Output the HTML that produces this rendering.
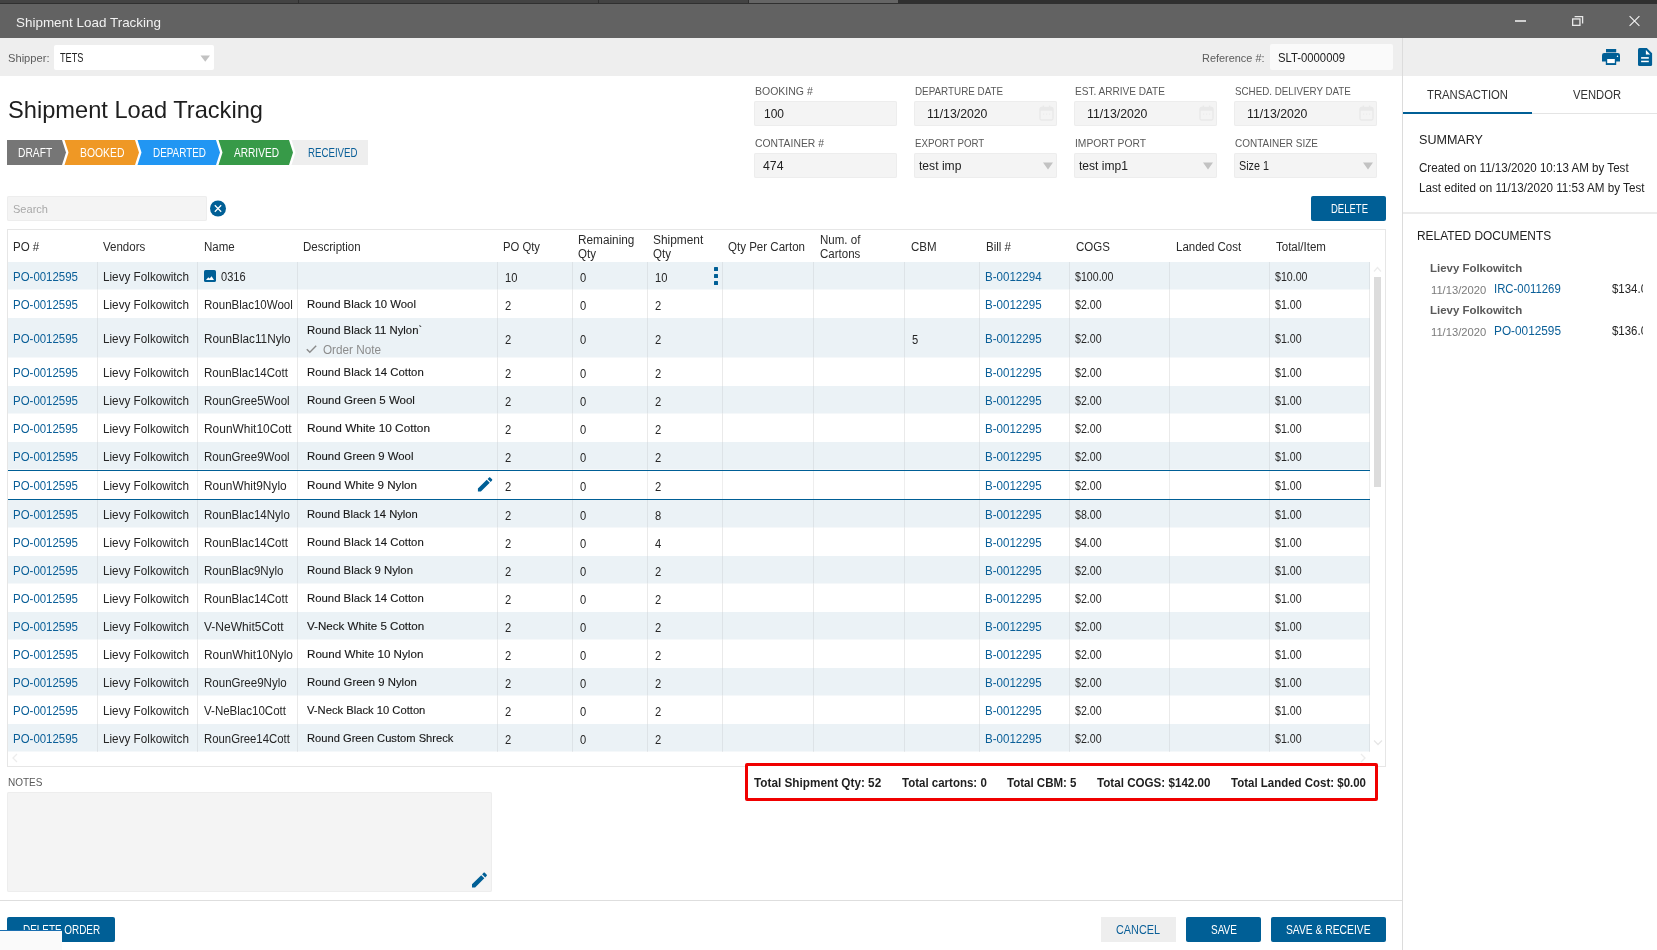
<!DOCTYPE html>
<html><head><meta charset="utf-8"><title>Shipment Load Tracking</title>
<style>
html,body{margin:0;padding:0;}
body{width:1657px;height:950px;position:relative;overflow:hidden;background:#ffffff;font-family:"Liberation Sans",sans-serif;}
.t{position:absolute;white-space:nowrap;transform-origin:0 0;}
#root{position:absolute;left:0;top:0;width:1657px;height:950px;overflow:hidden;will-change:transform;}
</style></head><body>
<div id="root">
<div style="position:absolute;left:0px;top:0px;width:1657px;height:4px;background:#303030;"></div>
<div style="position:absolute;left:0px;top:0px;width:898px;height:3px;background:#434343;"></div>
<div style="position:absolute;left:298px;top:0px;width:1px;height:3px;background:#2f2f2f;"></div>
<div style="position:absolute;left:598px;top:0px;width:1px;height:3px;background:#2f2f2f;"></div>
<div style="position:absolute;left:748px;top:0px;width:1px;height:3px;background:#2f2f2f;"></div>
<div style="position:absolute;left:749px;top:0px;width:149px;height:3px;background:#656565;"></div>
<div style="position:absolute;left:0px;top:4px;width:1657px;height:34px;background:#626262;"></div>
<div class="t" style="left:15.5px;top:16.02px;font-size:13.5px;line-height:13.5px;color:#f2f2f2;transform:scaleX(0.9959);">Shipment Load Tracking</div>
<div style="position:absolute;left:1515px;top:20px;width:10.5px;height:2px;background:#d0d0d0;"></div>
<svg style="position:absolute;left:1566px;top:10px" width="24" height="22" viewBox="1566 10 24 22"><rect x="1572.65" y="18.95" width="7.3" height="6.4" fill="none" stroke="#e8e8e8" stroke-width="1.3"/><path d="M1574.6 16.6 H1582.6 V23.4" fill="none" stroke="#e8e8e8" stroke-width="1.3"/></svg>
<svg style="position:absolute;left:1626px;top:13px" width="16" height="16" viewBox="1626 13 16 16"><path d="M1629.6 16.1 L1639.4 25.9 M1639.4 16.1 L1629.6 25.9" stroke="#f0f0f0" stroke-width="1.15"/></svg>
<div style="position:absolute;left:0px;top:38px;width:1402px;height:38px;background:#eeeeee;"></div>
<div style="position:absolute;left:1403px;top:38px;width:254px;height:38px;background:#eeeeee;"></div>
<div style="position:absolute;left:1402px;top:38px;width:1px;height:912px;background:#dcdcdc;"></div>
<div class="t" style="left:7.5px;top:53.01px;font-size:11.5px;line-height:11.5px;color:#5c5c5c;transform:scaleX(0.9688);">Shipper:</div>
<div style="position:absolute;left:54px;top:45px;width:160px;height:25px;background:#ffffff;border-radius:2px;"></div>
<div class="t" style="left:59.5px;top:51.91px;font-size:12.8px;line-height:12.8px;color:#222;transform:scaleX(0.7183);">TETS</div>
<svg style="position:absolute;left:200px;top:55px" width="11" height="7"><path d="M0.5 0.5 L10 0.5 L5.25 6.7 Z" fill="#c2c2c2"/></svg>
<div class="t" style="left:1201.5px;top:53.01px;font-size:11.5px;line-height:11.5px;color:#5c5c5c;transform:scaleX(0.9492);">Reference #:</div>
<div style="position:absolute;left:1270px;top:44px;width:123px;height:26px;background:#fafafa;border-radius:2px;"></div>
<div class="t" style="left:1278px;top:52.34px;font-size:12.3px;line-height:12.3px;color:#222;transform:scaleX(0.9184);">SLT-0000009</div>
<svg style="position:absolute;left:1596px;top:44px" width="61" height="26" viewBox="1596 44 61 26"><rect x="1606" y="49" width="10.2" height="3" fill="#005f96"/><rect x="1606" y="52" width="10.2" height="1" fill="#8fb1c9"/><path d="M1604.2 53 H1617.8 Q1620 53 1620 55.2 V61.5 H1602 V55.2 Q1602 53 1604.2 53 Z" fill="#005f96"/><rect x="1605.8" y="58" width="10.4" height="7" fill="#005f96"/><rect x="1607.2" y="59" width="7.6" height="4.1" fill="#ffffff"/><path d="M1616.6 56.9 L1617.5 55 L1618.3 56.9 Z" fill="#ffffff"/><path d="M1639.5 48 H1646.8 L1652.1 53.2 V64.6 Q1652.1 66.1 1650.6 66.1 H1639.5 Q1638 66.1 1638 64.6 V49.5 Q1638 48 1639.5 48 Z" fill="#005f96"/><path d="M1645.9 49.9 V54.5 H1650.2 Z" fill="#ffffff"/><rect x="1641.1" y="57.1" width="7.7" height="1.6" fill="#ffffff"/><rect x="1641.1" y="60.7" width="7.7" height="1.5" fill="#ffffff"/></svg>
<div class="t" style="left:7.5px;top:98.13px;font-size:24px;line-height:24px;color:#1e1e1e;transform:scaleX(0.9852);">Shipment Load Tracking</div>
<svg style="position:absolute;left:0;top:0" width="400" height="170">
<polygon points="7,140 62,140 66,152.5 62,165 7,165" fill="#767676"/>
<polygon points="64.5,140 135,140 139,152.5 135,165 64.5,165 68.5,152.5" fill="#ef9825"/>
<polygon points="137.5,140 216,140 220,152.5 216,165 137.5,165 141.5,152.5" fill="#2196f3"/>
<polygon points="218.5,140 289,140 293,152.5 289,165 218.5,165 222.5,152.5" fill="#379a48"/>
<polygon points="291.5,140 368,140 368,165 291.5,165 295.5,152.5" fill="#eeeeee"/>
</svg>
<div class="t" style="left:17.7px;top:146.95px;font-size:12.4px;line-height:12.4px;color:#ffffff;transform:scaleX(0.8275);">DRAFT</div>
<div class="t" style="left:79.8px;top:146.95px;font-size:12.4px;line-height:12.4px;color:#ffffff;transform:scaleX(0.8368);">BOOKED</div>
<div class="t" style="left:152.5px;top:146.95px;font-size:12.4px;line-height:12.4px;color:#ffffff;transform:scaleX(0.7984);">DEPARTED</div>
<div class="t" style="left:233.5px;top:146.95px;font-size:12.4px;line-height:12.4px;color:#ffffff;transform:scaleX(0.8163);">ARRIVED</div>
<div class="t" style="left:307.5px;top:146.95px;font-size:12.4px;line-height:12.4px;color:#0a5f98;transform:scaleX(0.7808);">RECEIVED</div>
<div class="t" style="left:754.5px;top:85.87px;font-size:11.2px;line-height:11.2px;color:#595959;transform:scaleX(0.9381);">BOOKING #</div>
<div style="position:absolute;left:754px;top:101px;width:143px;height:25px;background:#f4f4f4;border-radius:2px;box-shadow:inset 0 0 0 1px #ededed;"></div>
<div class="t" style="left:754.5px;top:137.87px;font-size:11.2px;line-height:11.2px;color:#595959;transform:scaleX(0.9266);">CONTAINER #</div>
<div style="position:absolute;left:754px;top:153px;width:143px;height:25px;background:#f4f4f4;border-radius:2px;box-shadow:inset 0 0 0 1px #ededed;"></div>
<div class="t" style="left:764px;top:107.77px;font-size:12.5px;line-height:12.5px;color:#222;transform:scaleX(0.9589);">100</div>
<div class="t" style="left:763px;top:159.77px;font-size:12.5px;line-height:12.5px;color:#222;transform:scaleX(0.9829);">474</div>
<div class="t" style="left:914.5px;top:85.87px;font-size:11.2px;line-height:11.2px;color:#595959;transform:scaleX(0.8803);">DEPARTURE DATE</div>
<div style="position:absolute;left:914px;top:101px;width:143px;height:25px;background:#f4f4f4;border-radius:2px;box-shadow:inset 0 0 0 1px #ededed;"></div>
<div class="t" style="left:914.5px;top:137.87px;font-size:11.2px;line-height:11.2px;color:#595959;transform:scaleX(0.8711);">EXPORT PORT</div>
<div style="position:absolute;left:914px;top:153px;width:143px;height:25px;background:#f4f4f4;border-radius:2px;box-shadow:inset 0 0 0 1px #ededed;"></div>
<div class="t" style="left:926.6px;top:107.77px;font-size:12.5px;line-height:12.5px;color:#222;transform:scaleX(0.9800);">11/13/2020</div>
<svg style="position:absolute;left:1039px;top:105px" width="15" height="16" viewBox="0 0 15 16"><rect x="1" y="2.5" width="13" height="12.5" rx="1.5" fill="none" stroke="#e9e9e9" stroke-width="1.3"/><rect x="1" y="2.5" width="13" height="3.2" fill="#e9e9e9"/><rect x="3.5" y="0.5" width="1.6" height="3" fill="#e9e9e9"/><rect x="9.9" y="0.5" width="1.6" height="3" fill="#e9e9e9"/><rect x="4" y="8.5" width="1.2" height="1.2" fill="#ececec"/><rect x="7" y="8.5" width="1.2" height="1.2" fill="#ececec"/><rect x="10" y="8.5" width="1.2" height="1.2" fill="#ececec"/></svg>
<div class="t" style="left:919.3px;top:159.77px;font-size:12.5px;line-height:12.5px;color:#222;transform:scaleX(0.9689);">test imp</div>
<svg style="position:absolute;left:1043px;top:162px" width="11" height="8"><path d="M0 0.5 L10 0.5 L5 7.5 Z" fill="#c2c2c2"/></svg>
<div class="t" style="left:1074.5px;top:85.87px;font-size:11.2px;line-height:11.2px;color:#595959;transform:scaleX(0.9000);">EST. ARRIVE DATE</div>
<div style="position:absolute;left:1074px;top:101px;width:143px;height:25px;background:#f4f4f4;border-radius:2px;box-shadow:inset 0 0 0 1px #ededed;"></div>
<div class="t" style="left:1074.5px;top:137.87px;font-size:11.2px;line-height:11.2px;color:#595959;transform:scaleX(0.9200);">IMPORT PORT</div>
<div style="position:absolute;left:1074px;top:153px;width:143px;height:25px;background:#f4f4f4;border-radius:2px;box-shadow:inset 0 0 0 1px #ededed;"></div>
<div class="t" style="left:1086.6px;top:107.77px;font-size:12.5px;line-height:12.5px;color:#222;transform:scaleX(0.9800);">11/13/2020</div>
<svg style="position:absolute;left:1199px;top:105px" width="15" height="16" viewBox="0 0 15 16"><rect x="1" y="2.5" width="13" height="12.5" rx="1.5" fill="none" stroke="#e9e9e9" stroke-width="1.3"/><rect x="1" y="2.5" width="13" height="3.2" fill="#e9e9e9"/><rect x="3.5" y="0.5" width="1.6" height="3" fill="#e9e9e9"/><rect x="9.9" y="0.5" width="1.6" height="3" fill="#e9e9e9"/><rect x="4" y="8.5" width="1.2" height="1.2" fill="#ececec"/><rect x="7" y="8.5" width="1.2" height="1.2" fill="#ececec"/><rect x="10" y="8.5" width="1.2" height="1.2" fill="#ececec"/></svg>
<div class="t" style="left:1079.3px;top:159.77px;font-size:12.5px;line-height:12.5px;color:#222;transform:scaleX(0.9662);">test imp1</div>
<svg style="position:absolute;left:1203px;top:162px" width="11" height="8"><path d="M0 0.5 L10 0.5 L5 7.5 Z" fill="#c2c2c2"/></svg>
<div class="t" style="left:1234.5px;top:85.87px;font-size:11.2px;line-height:11.2px;color:#595959;transform:scaleX(0.8750);">SCHED. DELIVERY DATE</div>
<div style="position:absolute;left:1234px;top:101px;width:143px;height:25px;background:#f4f4f4;border-radius:2px;box-shadow:inset 0 0 0 1px #ededed;"></div>
<div class="t" style="left:1234.5px;top:137.87px;font-size:11.2px;line-height:11.2px;color:#595959;transform:scaleX(0.8912);">CONTAINER SIZE</div>
<div style="position:absolute;left:1234px;top:153px;width:143px;height:25px;background:#f4f4f4;border-radius:2px;box-shadow:inset 0 0 0 1px #ededed;"></div>
<div class="t" style="left:1246.6px;top:107.77px;font-size:12.5px;line-height:12.5px;color:#222;transform:scaleX(0.9800);">11/13/2020</div>
<svg style="position:absolute;left:1359px;top:105px" width="15" height="16" viewBox="0 0 15 16"><rect x="1" y="2.5" width="13" height="12.5" rx="1.5" fill="none" stroke="#e9e9e9" stroke-width="1.3"/><rect x="1" y="2.5" width="13" height="3.2" fill="#e9e9e9"/><rect x="3.5" y="0.5" width="1.6" height="3" fill="#e9e9e9"/><rect x="9.9" y="0.5" width="1.6" height="3" fill="#e9e9e9"/><rect x="4" y="8.5" width="1.2" height="1.2" fill="#ececec"/><rect x="7" y="8.5" width="1.2" height="1.2" fill="#ececec"/><rect x="10" y="8.5" width="1.2" height="1.2" fill="#ececec"/></svg>
<div class="t" style="left:1239.3px;top:159.77px;font-size:12.5px;line-height:12.5px;color:#222;transform:scaleX(0.8635);">Size 1</div>
<svg style="position:absolute;left:1363px;top:162px" width="11" height="8"><path d="M0 0.5 L10 0.5 L5 7.5 Z" fill="#c2c2c2"/></svg>
<div style="position:absolute;left:7px;top:196px;width:200px;height:25px;background:#f4f4f4;border-radius:2px;box-shadow:inset 0 0 0 1px #ededed;"></div>
<div class="t" style="left:13px;top:203.66px;font-size:11.8px;line-height:11.8px;color:#a9a9a9;transform:scaleX(0.9361);">Search</div>
<svg style="position:absolute;left:210px;top:200px" width="16" height="17" viewBox="0 0 16 17"><circle cx="8" cy="8.5" r="8" fill="#005f96"/><path d="M4.8 5.3 L11.2 11.7 M11.2 5.3 L4.8 11.7" stroke="#fff" stroke-width="1.25"/></svg>
<div style="position:absolute;left:1311px;top:196px;width:75px;height:25px;background:#005f96;border-radius:2px;"></div>
<div class="t" style="left:1330.5px;top:203.05px;font-size:12.4px;line-height:12.4px;color:#ffffff;transform:scaleX(0.7670);">DELETE</div>
<div style="position:absolute;left:7px;top:229px;width:1379px;height:1px;background:#e6e6e6;"></div>
<div style="position:absolute;left:7px;top:229px;width:1px;height:538px;background:#e6e6e6;"></div>
<div style="position:absolute;left:1385px;top:229px;width:1px;height:538px;background:#e6e6e6;"></div>
<div style="position:absolute;left:7px;top:766px;width:1379px;height:1px;background:#e6e6e6;"></div>
<div class="t" style="left:13px;top:241.29px;font-size:12px;line-height:12px;color:#2b2b2b;transform:scaleX(0.9600);">PO #</div>
<div class="t" style="left:103px;top:241.29px;font-size:12px;line-height:12px;color:#2b2b2b;transform:scaleX(0.9600);">Vendors</div>
<div class="t" style="left:203.5px;top:241.29px;font-size:12px;line-height:12px;color:#2b2b2b;transform:scaleX(0.9600);">Name</div>
<div class="t" style="left:303px;top:241.29px;font-size:12px;line-height:12px;color:#2b2b2b;transform:scaleX(0.9600);">Description</div>
<div class="t" style="left:503px;top:241.29px;font-size:12px;line-height:12px;color:#2b2b2b;transform:scaleX(0.9410);">PO Qty</div>
<div class="t" style="left:578px;top:233.79px;font-size:12px;line-height:12px;color:#2b2b2b;transform:scaleX(0.9830);">Remaining</div>
<div class="t" style="left:578px;top:247.79px;font-size:12px;line-height:12px;color:#2b2b2b;transform:scaleX(0.9600);">Qty</div>
<div class="t" style="left:653px;top:233.79px;font-size:12px;line-height:12px;color:#2b2b2b;transform:scaleX(0.9920);">Shipment</div>
<div class="t" style="left:653px;top:247.79px;font-size:12px;line-height:12px;color:#2b2b2b;transform:scaleX(0.9600);">Qty</div>
<div class="t" style="left:728px;top:241.29px;font-size:12px;line-height:12px;color:#2b2b2b;transform:scaleX(0.9620);">Qty Per Carton</div>
<div class="t" style="left:819.5px;top:233.79px;font-size:12px;line-height:12px;color:#2b2b2b;transform:scaleX(0.9600);">Num. of</div>
<div class="t" style="left:819.5px;top:247.79px;font-size:12px;line-height:12px;color:#2b2b2b;transform:scaleX(0.9600);">Cartons</div>
<div class="t" style="left:910.5px;top:241.29px;font-size:12px;line-height:12px;color:#2b2b2b;transform:scaleX(0.9600);">CBM</div>
<div class="t" style="left:985.5px;top:241.29px;font-size:12px;line-height:12px;color:#2b2b2b;transform:scaleX(0.9600);">Bill #</div>
<div class="t" style="left:1075.5px;top:241.29px;font-size:12px;line-height:12px;color:#2b2b2b;transform:scaleX(0.9600);">COGS</div>
<div class="t" style="left:1175.5px;top:241.29px;font-size:12px;line-height:12px;color:#2b2b2b;transform:scaleX(0.9580);">Landed Cost</div>
<div class="t" style="left:1275.5px;top:241.29px;font-size:12px;line-height:12px;color:#2b2b2b;transform:scaleX(0.9600);">Total/Item</div>
<div style="position:absolute;left:8px;top:262px;width:1361px;height:27px;background:#ebf2f6;"></div>
<div style="position:absolute;left:8px;top:289px;width:1361px;height:1px;background:#f5f8fa;"></div>
<div style="position:absolute;left:97px;top:262px;width:1px;height:27px;background:#dde3e7;"></div>
<div style="position:absolute;left:197px;top:262px;width:1px;height:27px;background:#dde3e7;"></div>
<div style="position:absolute;left:297px;top:262px;width:1px;height:27px;background:#dde3e7;"></div>
<div style="position:absolute;left:497px;top:262px;width:1px;height:27px;background:#dde3e7;"></div>
<div style="position:absolute;left:572px;top:262px;width:1px;height:27px;background:#dde3e7;"></div>
<div style="position:absolute;left:647px;top:262px;width:1px;height:27px;background:#dde3e7;"></div>
<div style="position:absolute;left:722px;top:262px;width:1px;height:27px;background:#dde3e7;"></div>
<div style="position:absolute;left:813px;top:262px;width:1px;height:27px;background:#dde3e7;"></div>
<div style="position:absolute;left:904px;top:262px;width:1px;height:27px;background:#dde3e7;"></div>
<div style="position:absolute;left:979px;top:262px;width:1px;height:27px;background:#dde3e7;"></div>
<div style="position:absolute;left:1069px;top:262px;width:1px;height:27px;background:#dde3e7;"></div>
<div style="position:absolute;left:1169px;top:262px;width:1px;height:27px;background:#dde3e7;"></div>
<div style="position:absolute;left:1269px;top:262px;width:1px;height:27px;background:#dde3e7;"></div>
<div style="position:absolute;left:1369px;top:262px;width:1px;height:27px;background:#dde3e7;"></div>
<div style="position:absolute;left:97px;top:289px;width:1px;height:1px;background:#e6e9eb;"></div>
<div style="position:absolute;left:197px;top:289px;width:1px;height:1px;background:#e6e9eb;"></div>
<div style="position:absolute;left:297px;top:289px;width:1px;height:1px;background:#e6e9eb;"></div>
<div style="position:absolute;left:497px;top:289px;width:1px;height:1px;background:#e6e9eb;"></div>
<div style="position:absolute;left:572px;top:289px;width:1px;height:1px;background:#e6e9eb;"></div>
<div style="position:absolute;left:647px;top:289px;width:1px;height:1px;background:#e6e9eb;"></div>
<div style="position:absolute;left:722px;top:289px;width:1px;height:1px;background:#e6e9eb;"></div>
<div style="position:absolute;left:813px;top:289px;width:1px;height:1px;background:#e6e9eb;"></div>
<div style="position:absolute;left:904px;top:289px;width:1px;height:1px;background:#e6e9eb;"></div>
<div style="position:absolute;left:979px;top:289px;width:1px;height:1px;background:#e6e9eb;"></div>
<div style="position:absolute;left:1069px;top:289px;width:1px;height:1px;background:#e6e9eb;"></div>
<div style="position:absolute;left:1169px;top:289px;width:1px;height:1px;background:#e6e9eb;"></div>
<div style="position:absolute;left:1269px;top:289px;width:1px;height:1px;background:#e6e9eb;"></div>
<div style="position:absolute;left:1369px;top:289px;width:1px;height:1px;background:#e6e9eb;"></div>
<div class="t" style="left:13px;top:271.29px;font-size:12px;line-height:12px;color:#0a5f98;transform:scaleX(0.9551);">PO-0012595</div>
<div class="t" style="left:103px;top:271.29px;font-size:12px;line-height:12px;color:#262626;transform:scaleX(0.9769);">Lievy Folkowitch</div>
<svg style="position:absolute;left:204px;top:270px" width="12" height="12" viewBox="0 0 12 12"><rect width="12" height="12" rx="1.6" fill="#005f96"/><path d="M2 10 L4.3 7.2 L5.6 8.6 L7.6 6.2 L10 10 Z" fill="#fff"/></svg>
<div class="t" style="left:220.8px;top:270.79px;font-size:12px;line-height:12px;color:#262626;transform:scaleX(0.9200);">0316</div>
<div class="t" style="left:504.7px;top:271.99px;font-size:12px;line-height:12px;color:#262626;transform:scaleX(0.9300);">10</div>
<div class="t" style="left:579.7px;top:271.99px;font-size:12px;line-height:12px;color:#262626;transform:scaleX(0.9300);">0</div>
<div class="t" style="left:655.0px;top:271.99px;font-size:12px;line-height:12px;color:#262626;transform:scaleX(0.9300);">10</div>
<div style="position:absolute;left:714px;top:267px;width:4px;height:4px;background:#005f96;border-radius:0.5px;"></div>
<div style="position:absolute;left:714px;top:274px;width:4px;height:4px;background:#005f96;border-radius:0.5px;"></div>
<div style="position:absolute;left:714px;top:281px;width:4px;height:4px;background:#005f96;border-radius:0.5px;"></div>
<div class="t" style="left:984.8px;top:271.29px;font-size:12px;line-height:12px;color:#0a5f98;transform:scaleX(0.9639);">B-0012294</div>
<div class="t" style="left:1075.0px;top:270.79px;font-size:12px;line-height:12px;color:#262626;transform:scaleX(0.8850);">$100.00</div>
<div class="t" style="left:1275.0px;top:270.79px;font-size:12px;line-height:12px;color:#262626;transform:scaleX(0.8850);">$10.00</div>
<div style="position:absolute;left:97px;top:290px;width:1px;height:28px;background:#eaeaea;"></div>
<div style="position:absolute;left:197px;top:290px;width:1px;height:28px;background:#eaeaea;"></div>
<div style="position:absolute;left:297px;top:290px;width:1px;height:28px;background:#eaeaea;"></div>
<div style="position:absolute;left:497px;top:290px;width:1px;height:28px;background:#eaeaea;"></div>
<div style="position:absolute;left:572px;top:290px;width:1px;height:28px;background:#eaeaea;"></div>
<div style="position:absolute;left:647px;top:290px;width:1px;height:28px;background:#eaeaea;"></div>
<div style="position:absolute;left:722px;top:290px;width:1px;height:28px;background:#eaeaea;"></div>
<div style="position:absolute;left:813px;top:290px;width:1px;height:28px;background:#eaeaea;"></div>
<div style="position:absolute;left:904px;top:290px;width:1px;height:28px;background:#eaeaea;"></div>
<div style="position:absolute;left:979px;top:290px;width:1px;height:28px;background:#eaeaea;"></div>
<div style="position:absolute;left:1069px;top:290px;width:1px;height:28px;background:#eaeaea;"></div>
<div style="position:absolute;left:1169px;top:290px;width:1px;height:28px;background:#eaeaea;"></div>
<div style="position:absolute;left:1269px;top:290px;width:1px;height:28px;background:#eaeaea;"></div>
<div style="position:absolute;left:1369px;top:290px;width:1px;height:28px;background:#eaeaea;"></div>
<div class="t" style="left:13px;top:299.29px;font-size:12px;line-height:12px;color:#0a5f98;transform:scaleX(0.9551);">PO-0012595</div>
<div class="t" style="left:103px;top:299.29px;font-size:12px;line-height:12px;color:#262626;transform:scaleX(0.9769);">Lievy Folkowitch</div>
<div class="t" style="left:203.5px;top:299.29px;font-size:12px;line-height:12px;color:#262626;transform:scaleX(0.9600);">RounBlac10Wool</div>
<div class="t" style="left:306.5px;top:299.16px;font-size:11.8px;line-height:11.8px;color:#161616;transform:scaleX(0.9620);-webkit-text-stroke:0.12px #161616;">Round Black 10 Wool</div>
<div class="t" style="left:504.7px;top:299.99px;font-size:12px;line-height:12px;color:#262626;transform:scaleX(0.9300);">2</div>
<div class="t" style="left:579.7px;top:299.99px;font-size:12px;line-height:12px;color:#262626;transform:scaleX(0.9300);">0</div>
<div class="t" style="left:655.0px;top:299.99px;font-size:12px;line-height:12px;color:#262626;transform:scaleX(0.9300);">2</div>
<div class="t" style="left:984.8px;top:299.29px;font-size:12px;line-height:12px;color:#0a5f98;transform:scaleX(0.9639);">B-0012295</div>
<div class="t" style="left:1075.0px;top:298.79px;font-size:12px;line-height:12px;color:#262626;transform:scaleX(0.8850);">$2.00</div>
<div class="t" style="left:1275.0px;top:298.79px;font-size:12px;line-height:12px;color:#262626;transform:scaleX(0.8850);">$1.00</div>
<div style="position:absolute;left:8px;top:318px;width:1361px;height:39px;background:#ebf2f6;"></div>
<div style="position:absolute;left:8px;top:357px;width:1361px;height:1px;background:#f5f8fa;"></div>
<div style="position:absolute;left:97px;top:318px;width:1px;height:39px;background:#dde3e7;"></div>
<div style="position:absolute;left:197px;top:318px;width:1px;height:39px;background:#dde3e7;"></div>
<div style="position:absolute;left:297px;top:318px;width:1px;height:39px;background:#dde3e7;"></div>
<div style="position:absolute;left:497px;top:318px;width:1px;height:39px;background:#dde3e7;"></div>
<div style="position:absolute;left:572px;top:318px;width:1px;height:39px;background:#dde3e7;"></div>
<div style="position:absolute;left:647px;top:318px;width:1px;height:39px;background:#dde3e7;"></div>
<div style="position:absolute;left:722px;top:318px;width:1px;height:39px;background:#dde3e7;"></div>
<div style="position:absolute;left:813px;top:318px;width:1px;height:39px;background:#dde3e7;"></div>
<div style="position:absolute;left:904px;top:318px;width:1px;height:39px;background:#dde3e7;"></div>
<div style="position:absolute;left:979px;top:318px;width:1px;height:39px;background:#dde3e7;"></div>
<div style="position:absolute;left:1069px;top:318px;width:1px;height:39px;background:#dde3e7;"></div>
<div style="position:absolute;left:1169px;top:318px;width:1px;height:39px;background:#dde3e7;"></div>
<div style="position:absolute;left:1269px;top:318px;width:1px;height:39px;background:#dde3e7;"></div>
<div style="position:absolute;left:1369px;top:318px;width:1px;height:39px;background:#dde3e7;"></div>
<div style="position:absolute;left:97px;top:357px;width:1px;height:1px;background:#e6e9eb;"></div>
<div style="position:absolute;left:197px;top:357px;width:1px;height:1px;background:#e6e9eb;"></div>
<div style="position:absolute;left:297px;top:357px;width:1px;height:1px;background:#e6e9eb;"></div>
<div style="position:absolute;left:497px;top:357px;width:1px;height:1px;background:#e6e9eb;"></div>
<div style="position:absolute;left:572px;top:357px;width:1px;height:1px;background:#e6e9eb;"></div>
<div style="position:absolute;left:647px;top:357px;width:1px;height:1px;background:#e6e9eb;"></div>
<div style="position:absolute;left:722px;top:357px;width:1px;height:1px;background:#e6e9eb;"></div>
<div style="position:absolute;left:813px;top:357px;width:1px;height:1px;background:#e6e9eb;"></div>
<div style="position:absolute;left:904px;top:357px;width:1px;height:1px;background:#e6e9eb;"></div>
<div style="position:absolute;left:979px;top:357px;width:1px;height:1px;background:#e6e9eb;"></div>
<div style="position:absolute;left:1069px;top:357px;width:1px;height:1px;background:#e6e9eb;"></div>
<div style="position:absolute;left:1169px;top:357px;width:1px;height:1px;background:#e6e9eb;"></div>
<div style="position:absolute;left:1269px;top:357px;width:1px;height:1px;background:#e6e9eb;"></div>
<div style="position:absolute;left:1369px;top:357px;width:1px;height:1px;background:#e6e9eb;"></div>
<div class="t" style="left:13px;top:333.29px;font-size:12px;line-height:12px;color:#0a5f98;transform:scaleX(0.9551);">PO-0012595</div>
<div class="t" style="left:103px;top:333.29px;font-size:12px;line-height:12px;color:#262626;transform:scaleX(0.9769);">Lievy Folkowitch</div>
<div class="t" style="left:203.5px;top:333.29px;font-size:12px;line-height:12px;color:#262626;transform:scaleX(0.9792);">RounBlac11Nylo</div>
<div class="t" style="left:306.5px;top:324.96px;font-size:11.8px;line-height:11.8px;color:#161616;transform:scaleX(0.9620);-webkit-text-stroke:0.12px #161616;">Round Black 11 Nylon`</div>
<svg style="position:absolute;left:306px;top:345px" width="11" height="9" viewBox="0 0 11 9"><path d="M0.8 4.2 L3.8 7.3 L10.2 0.8" fill="none" stroke="#8a8a8a" stroke-width="1.4"/></svg>
<div class="t" style="left:322.7px;top:343.89px;font-size:12px;line-height:12px;color:#8c8c8c;transform:scaleX(0.9771);">Order Note</div>
<div class="t" style="left:504.7px;top:333.99px;font-size:12px;line-height:12px;color:#262626;transform:scaleX(0.9300);">2</div>
<div class="t" style="left:579.7px;top:333.99px;font-size:12px;line-height:12px;color:#262626;transform:scaleX(0.9300);">0</div>
<div class="t" style="left:655.0px;top:333.99px;font-size:12px;line-height:12px;color:#262626;transform:scaleX(0.9300);">2</div>
<div class="t" style="left:911.8px;top:333.99px;font-size:12px;line-height:12px;color:#262626;transform:scaleX(0.9300);">5</div>
<div class="t" style="left:984.8px;top:333.29px;font-size:12px;line-height:12px;color:#0a5f98;transform:scaleX(0.9639);">B-0012295</div>
<div class="t" style="left:1075.0px;top:332.79px;font-size:12px;line-height:12px;color:#262626;transform:scaleX(0.8850);">$2.00</div>
<div class="t" style="left:1275.0px;top:332.79px;font-size:12px;line-height:12px;color:#262626;transform:scaleX(0.8850);">$1.00</div>
<div style="position:absolute;left:97px;top:358px;width:1px;height:28px;background:#eaeaea;"></div>
<div style="position:absolute;left:197px;top:358px;width:1px;height:28px;background:#eaeaea;"></div>
<div style="position:absolute;left:297px;top:358px;width:1px;height:28px;background:#eaeaea;"></div>
<div style="position:absolute;left:497px;top:358px;width:1px;height:28px;background:#eaeaea;"></div>
<div style="position:absolute;left:572px;top:358px;width:1px;height:28px;background:#eaeaea;"></div>
<div style="position:absolute;left:647px;top:358px;width:1px;height:28px;background:#eaeaea;"></div>
<div style="position:absolute;left:722px;top:358px;width:1px;height:28px;background:#eaeaea;"></div>
<div style="position:absolute;left:813px;top:358px;width:1px;height:28px;background:#eaeaea;"></div>
<div style="position:absolute;left:904px;top:358px;width:1px;height:28px;background:#eaeaea;"></div>
<div style="position:absolute;left:979px;top:358px;width:1px;height:28px;background:#eaeaea;"></div>
<div style="position:absolute;left:1069px;top:358px;width:1px;height:28px;background:#eaeaea;"></div>
<div style="position:absolute;left:1169px;top:358px;width:1px;height:28px;background:#eaeaea;"></div>
<div style="position:absolute;left:1269px;top:358px;width:1px;height:28px;background:#eaeaea;"></div>
<div style="position:absolute;left:1369px;top:358px;width:1px;height:28px;background:#eaeaea;"></div>
<div class="t" style="left:13px;top:367.29px;font-size:12px;line-height:12px;color:#0a5f98;transform:scaleX(0.9551);">PO-0012595</div>
<div class="t" style="left:103px;top:367.29px;font-size:12px;line-height:12px;color:#262626;transform:scaleX(0.9769);">Lievy Folkowitch</div>
<div class="t" style="left:203.5px;top:367.29px;font-size:12px;line-height:12px;color:#262626;transform:scaleX(0.9600);">RounBlac14Cott</div>
<div class="t" style="left:306.5px;top:367.16px;font-size:11.8px;line-height:11.8px;color:#161616;transform:scaleX(0.9620);-webkit-text-stroke:0.12px #161616;">Round Black 14 Cotton</div>
<div class="t" style="left:504.7px;top:367.99px;font-size:12px;line-height:12px;color:#262626;transform:scaleX(0.9300);">2</div>
<div class="t" style="left:579.7px;top:367.99px;font-size:12px;line-height:12px;color:#262626;transform:scaleX(0.9300);">0</div>
<div class="t" style="left:655.0px;top:367.99px;font-size:12px;line-height:12px;color:#262626;transform:scaleX(0.9300);">2</div>
<div class="t" style="left:984.8px;top:367.29px;font-size:12px;line-height:12px;color:#0a5f98;transform:scaleX(0.9639);">B-0012295</div>
<div class="t" style="left:1075.0px;top:366.79px;font-size:12px;line-height:12px;color:#262626;transform:scaleX(0.8850);">$2.00</div>
<div class="t" style="left:1275.0px;top:366.79px;font-size:12px;line-height:12px;color:#262626;transform:scaleX(0.8850);">$1.00</div>
<div style="position:absolute;left:8px;top:386px;width:1361px;height:27px;background:#ebf2f6;"></div>
<div style="position:absolute;left:8px;top:413px;width:1361px;height:1px;background:#f5f8fa;"></div>
<div style="position:absolute;left:97px;top:386px;width:1px;height:27px;background:#dde3e7;"></div>
<div style="position:absolute;left:197px;top:386px;width:1px;height:27px;background:#dde3e7;"></div>
<div style="position:absolute;left:297px;top:386px;width:1px;height:27px;background:#dde3e7;"></div>
<div style="position:absolute;left:497px;top:386px;width:1px;height:27px;background:#dde3e7;"></div>
<div style="position:absolute;left:572px;top:386px;width:1px;height:27px;background:#dde3e7;"></div>
<div style="position:absolute;left:647px;top:386px;width:1px;height:27px;background:#dde3e7;"></div>
<div style="position:absolute;left:722px;top:386px;width:1px;height:27px;background:#dde3e7;"></div>
<div style="position:absolute;left:813px;top:386px;width:1px;height:27px;background:#dde3e7;"></div>
<div style="position:absolute;left:904px;top:386px;width:1px;height:27px;background:#dde3e7;"></div>
<div style="position:absolute;left:979px;top:386px;width:1px;height:27px;background:#dde3e7;"></div>
<div style="position:absolute;left:1069px;top:386px;width:1px;height:27px;background:#dde3e7;"></div>
<div style="position:absolute;left:1169px;top:386px;width:1px;height:27px;background:#dde3e7;"></div>
<div style="position:absolute;left:1269px;top:386px;width:1px;height:27px;background:#dde3e7;"></div>
<div style="position:absolute;left:1369px;top:386px;width:1px;height:27px;background:#dde3e7;"></div>
<div style="position:absolute;left:97px;top:413px;width:1px;height:1px;background:#e6e9eb;"></div>
<div style="position:absolute;left:197px;top:413px;width:1px;height:1px;background:#e6e9eb;"></div>
<div style="position:absolute;left:297px;top:413px;width:1px;height:1px;background:#e6e9eb;"></div>
<div style="position:absolute;left:497px;top:413px;width:1px;height:1px;background:#e6e9eb;"></div>
<div style="position:absolute;left:572px;top:413px;width:1px;height:1px;background:#e6e9eb;"></div>
<div style="position:absolute;left:647px;top:413px;width:1px;height:1px;background:#e6e9eb;"></div>
<div style="position:absolute;left:722px;top:413px;width:1px;height:1px;background:#e6e9eb;"></div>
<div style="position:absolute;left:813px;top:413px;width:1px;height:1px;background:#e6e9eb;"></div>
<div style="position:absolute;left:904px;top:413px;width:1px;height:1px;background:#e6e9eb;"></div>
<div style="position:absolute;left:979px;top:413px;width:1px;height:1px;background:#e6e9eb;"></div>
<div style="position:absolute;left:1069px;top:413px;width:1px;height:1px;background:#e6e9eb;"></div>
<div style="position:absolute;left:1169px;top:413px;width:1px;height:1px;background:#e6e9eb;"></div>
<div style="position:absolute;left:1269px;top:413px;width:1px;height:1px;background:#e6e9eb;"></div>
<div style="position:absolute;left:1369px;top:413px;width:1px;height:1px;background:#e6e9eb;"></div>
<div class="t" style="left:13px;top:395.29px;font-size:12px;line-height:12px;color:#0a5f98;transform:scaleX(0.9551);">PO-0012595</div>
<div class="t" style="left:103px;top:395.29px;font-size:12px;line-height:12px;color:#262626;transform:scaleX(0.9769);">Lievy Folkowitch</div>
<div class="t" style="left:203.5px;top:395.29px;font-size:12px;line-height:12px;color:#262626;transform:scaleX(0.9600);">RounGree5Wool</div>
<div class="t" style="left:306.5px;top:395.16px;font-size:11.8px;line-height:11.8px;color:#161616;transform:scaleX(0.9756);-webkit-text-stroke:0.12px #161616;">Round Green 5 Wool</div>
<div class="t" style="left:504.7px;top:395.99px;font-size:12px;line-height:12px;color:#262626;transform:scaleX(0.9300);">2</div>
<div class="t" style="left:579.7px;top:395.99px;font-size:12px;line-height:12px;color:#262626;transform:scaleX(0.9300);">0</div>
<div class="t" style="left:655.0px;top:395.99px;font-size:12px;line-height:12px;color:#262626;transform:scaleX(0.9300);">2</div>
<div class="t" style="left:984.8px;top:395.29px;font-size:12px;line-height:12px;color:#0a5f98;transform:scaleX(0.9639);">B-0012295</div>
<div class="t" style="left:1075.0px;top:394.79px;font-size:12px;line-height:12px;color:#262626;transform:scaleX(0.8850);">$2.00</div>
<div class="t" style="left:1275.0px;top:394.79px;font-size:12px;line-height:12px;color:#262626;transform:scaleX(0.8850);">$1.00</div>
<div style="position:absolute;left:97px;top:414px;width:1px;height:28px;background:#eaeaea;"></div>
<div style="position:absolute;left:197px;top:414px;width:1px;height:28px;background:#eaeaea;"></div>
<div style="position:absolute;left:297px;top:414px;width:1px;height:28px;background:#eaeaea;"></div>
<div style="position:absolute;left:497px;top:414px;width:1px;height:28px;background:#eaeaea;"></div>
<div style="position:absolute;left:572px;top:414px;width:1px;height:28px;background:#eaeaea;"></div>
<div style="position:absolute;left:647px;top:414px;width:1px;height:28px;background:#eaeaea;"></div>
<div style="position:absolute;left:722px;top:414px;width:1px;height:28px;background:#eaeaea;"></div>
<div style="position:absolute;left:813px;top:414px;width:1px;height:28px;background:#eaeaea;"></div>
<div style="position:absolute;left:904px;top:414px;width:1px;height:28px;background:#eaeaea;"></div>
<div style="position:absolute;left:979px;top:414px;width:1px;height:28px;background:#eaeaea;"></div>
<div style="position:absolute;left:1069px;top:414px;width:1px;height:28px;background:#eaeaea;"></div>
<div style="position:absolute;left:1169px;top:414px;width:1px;height:28px;background:#eaeaea;"></div>
<div style="position:absolute;left:1269px;top:414px;width:1px;height:28px;background:#eaeaea;"></div>
<div style="position:absolute;left:1369px;top:414px;width:1px;height:28px;background:#eaeaea;"></div>
<div class="t" style="left:13px;top:423.29px;font-size:12px;line-height:12px;color:#0a5f98;transform:scaleX(0.9551);">PO-0012595</div>
<div class="t" style="left:103px;top:423.29px;font-size:12px;line-height:12px;color:#262626;transform:scaleX(0.9769);">Lievy Folkowitch</div>
<div class="t" style="left:203.5px;top:423.29px;font-size:12px;line-height:12px;color:#262626;transform:scaleX(0.9941);">RounWhit10Cott</div>
<div class="t" style="left:306.5px;top:423.16px;font-size:11.8px;line-height:11.8px;color:#161616;transform:scaleX(1.0028);-webkit-text-stroke:0.12px #161616;">Round White 10 Cotton</div>
<div class="t" style="left:504.7px;top:423.99px;font-size:12px;line-height:12px;color:#262626;transform:scaleX(0.9300);">2</div>
<div class="t" style="left:579.7px;top:423.99px;font-size:12px;line-height:12px;color:#262626;transform:scaleX(0.9300);">0</div>
<div class="t" style="left:655.0px;top:423.99px;font-size:12px;line-height:12px;color:#262626;transform:scaleX(0.9300);">2</div>
<div class="t" style="left:984.8px;top:423.29px;font-size:12px;line-height:12px;color:#0a5f98;transform:scaleX(0.9639);">B-0012295</div>
<div class="t" style="left:1075.0px;top:422.79px;font-size:12px;line-height:12px;color:#262626;transform:scaleX(0.8850);">$2.00</div>
<div class="t" style="left:1275.0px;top:422.79px;font-size:12px;line-height:12px;color:#262626;transform:scaleX(0.8850);">$1.00</div>
<div style="position:absolute;left:8px;top:442px;width:1361px;height:27px;background:#ebf2f6;"></div>
<div style="position:absolute;left:8px;top:469px;width:1361px;height:1px;background:#f5f8fa;"></div>
<div style="position:absolute;left:97px;top:442px;width:1px;height:27px;background:#dde3e7;"></div>
<div style="position:absolute;left:197px;top:442px;width:1px;height:27px;background:#dde3e7;"></div>
<div style="position:absolute;left:297px;top:442px;width:1px;height:27px;background:#dde3e7;"></div>
<div style="position:absolute;left:497px;top:442px;width:1px;height:27px;background:#dde3e7;"></div>
<div style="position:absolute;left:572px;top:442px;width:1px;height:27px;background:#dde3e7;"></div>
<div style="position:absolute;left:647px;top:442px;width:1px;height:27px;background:#dde3e7;"></div>
<div style="position:absolute;left:722px;top:442px;width:1px;height:27px;background:#dde3e7;"></div>
<div style="position:absolute;left:813px;top:442px;width:1px;height:27px;background:#dde3e7;"></div>
<div style="position:absolute;left:904px;top:442px;width:1px;height:27px;background:#dde3e7;"></div>
<div style="position:absolute;left:979px;top:442px;width:1px;height:27px;background:#dde3e7;"></div>
<div style="position:absolute;left:1069px;top:442px;width:1px;height:27px;background:#dde3e7;"></div>
<div style="position:absolute;left:1169px;top:442px;width:1px;height:27px;background:#dde3e7;"></div>
<div style="position:absolute;left:1269px;top:442px;width:1px;height:27px;background:#dde3e7;"></div>
<div style="position:absolute;left:1369px;top:442px;width:1px;height:27px;background:#dde3e7;"></div>
<div style="position:absolute;left:97px;top:469px;width:1px;height:1px;background:#e6e9eb;"></div>
<div style="position:absolute;left:197px;top:469px;width:1px;height:1px;background:#e6e9eb;"></div>
<div style="position:absolute;left:297px;top:469px;width:1px;height:1px;background:#e6e9eb;"></div>
<div style="position:absolute;left:497px;top:469px;width:1px;height:1px;background:#e6e9eb;"></div>
<div style="position:absolute;left:572px;top:469px;width:1px;height:1px;background:#e6e9eb;"></div>
<div style="position:absolute;left:647px;top:469px;width:1px;height:1px;background:#e6e9eb;"></div>
<div style="position:absolute;left:722px;top:469px;width:1px;height:1px;background:#e6e9eb;"></div>
<div style="position:absolute;left:813px;top:469px;width:1px;height:1px;background:#e6e9eb;"></div>
<div style="position:absolute;left:904px;top:469px;width:1px;height:1px;background:#e6e9eb;"></div>
<div style="position:absolute;left:979px;top:469px;width:1px;height:1px;background:#e6e9eb;"></div>
<div style="position:absolute;left:1069px;top:469px;width:1px;height:1px;background:#e6e9eb;"></div>
<div style="position:absolute;left:1169px;top:469px;width:1px;height:1px;background:#e6e9eb;"></div>
<div style="position:absolute;left:1269px;top:469px;width:1px;height:1px;background:#e6e9eb;"></div>
<div style="position:absolute;left:1369px;top:469px;width:1px;height:1px;background:#e6e9eb;"></div>
<div class="t" style="left:13px;top:451.29px;font-size:12px;line-height:12px;color:#0a5f98;transform:scaleX(0.9551);">PO-0012595</div>
<div class="t" style="left:103px;top:451.29px;font-size:12px;line-height:12px;color:#262626;transform:scaleX(0.9769);">Lievy Folkowitch</div>
<div class="t" style="left:203.5px;top:451.29px;font-size:12px;line-height:12px;color:#262626;transform:scaleX(0.9600);">RounGree9Wool</div>
<div class="t" style="left:306.5px;top:451.16px;font-size:11.8px;line-height:11.8px;color:#161616;transform:scaleX(0.9620);-webkit-text-stroke:0.12px #161616;">Round Green 9 Wool</div>
<div class="t" style="left:504.7px;top:451.99px;font-size:12px;line-height:12px;color:#262626;transform:scaleX(0.9300);">2</div>
<div class="t" style="left:579.7px;top:451.99px;font-size:12px;line-height:12px;color:#262626;transform:scaleX(0.9300);">0</div>
<div class="t" style="left:655.0px;top:451.99px;font-size:12px;line-height:12px;color:#262626;transform:scaleX(0.9300);">2</div>
<div class="t" style="left:984.8px;top:451.29px;font-size:12px;line-height:12px;color:#0a5f98;transform:scaleX(0.9639);">B-0012295</div>
<div class="t" style="left:1075.0px;top:450.79px;font-size:12px;line-height:12px;color:#262626;transform:scaleX(0.8850);">$2.00</div>
<div class="t" style="left:1275.0px;top:450.79px;font-size:12px;line-height:12px;color:#262626;transform:scaleX(0.8850);">$1.00</div>
<div style="position:absolute;left:8px;top:470px;width:1362px;height:30px;background:#ffffff;"></div>
<div style="position:absolute;left:97px;top:471px;width:1px;height:28px;background:#eeeeee;"></div>
<div style="position:absolute;left:197px;top:471px;width:1px;height:28px;background:#eeeeee;"></div>
<div style="position:absolute;left:297px;top:471px;width:1px;height:28px;background:#eeeeee;"></div>
<div style="position:absolute;left:497px;top:471px;width:1px;height:28px;background:#eeeeee;"></div>
<div style="position:absolute;left:572px;top:471px;width:1px;height:28px;background:#eeeeee;"></div>
<div style="position:absolute;left:647px;top:471px;width:1px;height:28px;background:#eeeeee;"></div>
<div style="position:absolute;left:722px;top:471px;width:1px;height:28px;background:#eeeeee;"></div>
<div style="position:absolute;left:813px;top:471px;width:1px;height:28px;background:#eeeeee;"></div>
<div style="position:absolute;left:904px;top:471px;width:1px;height:28px;background:#eeeeee;"></div>
<div style="position:absolute;left:979px;top:471px;width:1px;height:28px;background:#eeeeee;"></div>
<div style="position:absolute;left:1069px;top:471px;width:1px;height:28px;background:#eeeeee;"></div>
<div style="position:absolute;left:1169px;top:471px;width:1px;height:28px;background:#eeeeee;"></div>
<div style="position:absolute;left:1269px;top:471px;width:1px;height:28px;background:#eeeeee;"></div>
<div style="position:absolute;left:1369px;top:471px;width:1px;height:28px;background:#eeeeee;"></div>
<div style="position:absolute;left:8px;top:470px;width:1362px;height:1px;background:#005f96;"></div>
<div style="position:absolute;left:8px;top:499px;width:1362px;height:1px;background:#005f96;"></div>
<div class="t" style="left:13px;top:480.29px;font-size:12px;line-height:12px;color:#0a5f98;transform:scaleX(0.9551);">PO-0012595</div>
<div class="t" style="left:103px;top:480.29px;font-size:12px;line-height:12px;color:#262626;transform:scaleX(0.9769);">Lievy Folkowitch</div>
<div class="t" style="left:203.5px;top:480.29px;font-size:12px;line-height:12px;color:#262626;transform:scaleX(0.9912);">RounWhit9Nylo</div>
<div class="t" style="left:306.5px;top:479.96px;font-size:11.8px;line-height:11.8px;color:#161616;transform:scaleX(0.9862);-webkit-text-stroke:0.12px #161616;">Round White 9 Nylon</div>
<svg style="position:absolute;left:0;top:0;overflow:visible" width="1" height="1"><path transform="translate(475.5 474.8) scale(0.8)" d="M3 17.25V21h3.75L17.81 9.94l-3.75-3.75L3 17.25zM20.71 7.04c.39-.39.39-1.02 0-1.41l-2.34-2.34c-.39-.39-1.02-.39-1.41 0l-1.83 1.83 3.75 3.75 1.83-1.83z" fill="#005f96"/></svg>
<div class="t" style="left:504.7px;top:480.99px;font-size:12px;line-height:12px;color:#262626;transform:scaleX(0.9300);">2</div>
<div class="t" style="left:579.7px;top:480.99px;font-size:12px;line-height:12px;color:#262626;transform:scaleX(0.9300);">0</div>
<div class="t" style="left:655.0px;top:480.99px;font-size:12px;line-height:12px;color:#262626;transform:scaleX(0.9300);">2</div>
<div class="t" style="left:984.8px;top:480.29px;font-size:12px;line-height:12px;color:#0a5f98;transform:scaleX(0.9639);">B-0012295</div>
<div class="t" style="left:1075.0px;top:479.79px;font-size:12px;line-height:12px;color:#262626;transform:scaleX(0.8850);">$2.00</div>
<div class="t" style="left:1275.0px;top:479.79px;font-size:12px;line-height:12px;color:#262626;transform:scaleX(0.8850);">$1.00</div>
<div style="position:absolute;left:8px;top:500px;width:1361px;height:27px;background:#ebf2f6;"></div>
<div style="position:absolute;left:8px;top:527px;width:1361px;height:1px;background:#f5f8fa;"></div>
<div style="position:absolute;left:97px;top:500px;width:1px;height:27px;background:#dde3e7;"></div>
<div style="position:absolute;left:197px;top:500px;width:1px;height:27px;background:#dde3e7;"></div>
<div style="position:absolute;left:297px;top:500px;width:1px;height:27px;background:#dde3e7;"></div>
<div style="position:absolute;left:497px;top:500px;width:1px;height:27px;background:#dde3e7;"></div>
<div style="position:absolute;left:572px;top:500px;width:1px;height:27px;background:#dde3e7;"></div>
<div style="position:absolute;left:647px;top:500px;width:1px;height:27px;background:#dde3e7;"></div>
<div style="position:absolute;left:722px;top:500px;width:1px;height:27px;background:#dde3e7;"></div>
<div style="position:absolute;left:813px;top:500px;width:1px;height:27px;background:#dde3e7;"></div>
<div style="position:absolute;left:904px;top:500px;width:1px;height:27px;background:#dde3e7;"></div>
<div style="position:absolute;left:979px;top:500px;width:1px;height:27px;background:#dde3e7;"></div>
<div style="position:absolute;left:1069px;top:500px;width:1px;height:27px;background:#dde3e7;"></div>
<div style="position:absolute;left:1169px;top:500px;width:1px;height:27px;background:#dde3e7;"></div>
<div style="position:absolute;left:1269px;top:500px;width:1px;height:27px;background:#dde3e7;"></div>
<div style="position:absolute;left:1369px;top:500px;width:1px;height:27px;background:#dde3e7;"></div>
<div style="position:absolute;left:97px;top:527px;width:1px;height:1px;background:#e6e9eb;"></div>
<div style="position:absolute;left:197px;top:527px;width:1px;height:1px;background:#e6e9eb;"></div>
<div style="position:absolute;left:297px;top:527px;width:1px;height:1px;background:#e6e9eb;"></div>
<div style="position:absolute;left:497px;top:527px;width:1px;height:1px;background:#e6e9eb;"></div>
<div style="position:absolute;left:572px;top:527px;width:1px;height:1px;background:#e6e9eb;"></div>
<div style="position:absolute;left:647px;top:527px;width:1px;height:1px;background:#e6e9eb;"></div>
<div style="position:absolute;left:722px;top:527px;width:1px;height:1px;background:#e6e9eb;"></div>
<div style="position:absolute;left:813px;top:527px;width:1px;height:1px;background:#e6e9eb;"></div>
<div style="position:absolute;left:904px;top:527px;width:1px;height:1px;background:#e6e9eb;"></div>
<div style="position:absolute;left:979px;top:527px;width:1px;height:1px;background:#e6e9eb;"></div>
<div style="position:absolute;left:1069px;top:527px;width:1px;height:1px;background:#e6e9eb;"></div>
<div style="position:absolute;left:1169px;top:527px;width:1px;height:1px;background:#e6e9eb;"></div>
<div style="position:absolute;left:1269px;top:527px;width:1px;height:1px;background:#e6e9eb;"></div>
<div style="position:absolute;left:1369px;top:527px;width:1px;height:1px;background:#e6e9eb;"></div>
<div class="t" style="left:13px;top:509.29px;font-size:12px;line-height:12px;color:#0a5f98;transform:scaleX(0.9551);">PO-0012595</div>
<div class="t" style="left:103px;top:509.29px;font-size:12px;line-height:12px;color:#262626;transform:scaleX(0.9769);">Lievy Folkowitch</div>
<div class="t" style="left:203.5px;top:509.29px;font-size:12px;line-height:12px;color:#262626;transform:scaleX(0.9600);">RounBlac14Nylo</div>
<div class="t" style="left:306.5px;top:509.16px;font-size:11.8px;line-height:11.8px;color:#161616;transform:scaleX(0.9492);-webkit-text-stroke:0.12px #161616;">Round Black 14 Nylon</div>
<div class="t" style="left:504.7px;top:509.99px;font-size:12px;line-height:12px;color:#262626;transform:scaleX(0.9300);">2</div>
<div class="t" style="left:579.7px;top:509.99px;font-size:12px;line-height:12px;color:#262626;transform:scaleX(0.9300);">0</div>
<div class="t" style="left:655.0px;top:509.99px;font-size:12px;line-height:12px;color:#262626;transform:scaleX(0.9300);">8</div>
<div class="t" style="left:984.8px;top:509.29px;font-size:12px;line-height:12px;color:#0a5f98;transform:scaleX(0.9639);">B-0012295</div>
<div class="t" style="left:1075.0px;top:508.79px;font-size:12px;line-height:12px;color:#262626;transform:scaleX(0.8850);">$8.00</div>
<div class="t" style="left:1275.0px;top:508.79px;font-size:12px;line-height:12px;color:#262626;transform:scaleX(0.8850);">$1.00</div>
<div style="position:absolute;left:97px;top:528px;width:1px;height:28px;background:#eaeaea;"></div>
<div style="position:absolute;left:197px;top:528px;width:1px;height:28px;background:#eaeaea;"></div>
<div style="position:absolute;left:297px;top:528px;width:1px;height:28px;background:#eaeaea;"></div>
<div style="position:absolute;left:497px;top:528px;width:1px;height:28px;background:#eaeaea;"></div>
<div style="position:absolute;left:572px;top:528px;width:1px;height:28px;background:#eaeaea;"></div>
<div style="position:absolute;left:647px;top:528px;width:1px;height:28px;background:#eaeaea;"></div>
<div style="position:absolute;left:722px;top:528px;width:1px;height:28px;background:#eaeaea;"></div>
<div style="position:absolute;left:813px;top:528px;width:1px;height:28px;background:#eaeaea;"></div>
<div style="position:absolute;left:904px;top:528px;width:1px;height:28px;background:#eaeaea;"></div>
<div style="position:absolute;left:979px;top:528px;width:1px;height:28px;background:#eaeaea;"></div>
<div style="position:absolute;left:1069px;top:528px;width:1px;height:28px;background:#eaeaea;"></div>
<div style="position:absolute;left:1169px;top:528px;width:1px;height:28px;background:#eaeaea;"></div>
<div style="position:absolute;left:1269px;top:528px;width:1px;height:28px;background:#eaeaea;"></div>
<div style="position:absolute;left:1369px;top:528px;width:1px;height:28px;background:#eaeaea;"></div>
<div class="t" style="left:13px;top:537.29px;font-size:12px;line-height:12px;color:#0a5f98;transform:scaleX(0.9551);">PO-0012595</div>
<div class="t" style="left:103px;top:537.29px;font-size:12px;line-height:12px;color:#262626;transform:scaleX(0.9769);">Lievy Folkowitch</div>
<div class="t" style="left:203.5px;top:537.29px;font-size:12px;line-height:12px;color:#262626;transform:scaleX(0.9600);">RounBlac14Cott</div>
<div class="t" style="left:306.5px;top:537.16px;font-size:11.8px;line-height:11.8px;color:#161616;transform:scaleX(0.9620);-webkit-text-stroke:0.12px #161616;">Round Black 14 Cotton</div>
<div class="t" style="left:504.7px;top:537.99px;font-size:12px;line-height:12px;color:#262626;transform:scaleX(0.9300);">2</div>
<div class="t" style="left:579.7px;top:537.99px;font-size:12px;line-height:12px;color:#262626;transform:scaleX(0.9300);">0</div>
<div class="t" style="left:655.0px;top:537.99px;font-size:12px;line-height:12px;color:#262626;transform:scaleX(0.9300);">4</div>
<div class="t" style="left:984.8px;top:537.29px;font-size:12px;line-height:12px;color:#0a5f98;transform:scaleX(0.9639);">B-0012295</div>
<div class="t" style="left:1075.0px;top:536.79px;font-size:12px;line-height:12px;color:#262626;transform:scaleX(0.8850);">$4.00</div>
<div class="t" style="left:1275.0px;top:536.79px;font-size:12px;line-height:12px;color:#262626;transform:scaleX(0.8850);">$1.00</div>
<div style="position:absolute;left:8px;top:556px;width:1361px;height:27px;background:#ebf2f6;"></div>
<div style="position:absolute;left:8px;top:583px;width:1361px;height:1px;background:#f5f8fa;"></div>
<div style="position:absolute;left:97px;top:556px;width:1px;height:27px;background:#dde3e7;"></div>
<div style="position:absolute;left:197px;top:556px;width:1px;height:27px;background:#dde3e7;"></div>
<div style="position:absolute;left:297px;top:556px;width:1px;height:27px;background:#dde3e7;"></div>
<div style="position:absolute;left:497px;top:556px;width:1px;height:27px;background:#dde3e7;"></div>
<div style="position:absolute;left:572px;top:556px;width:1px;height:27px;background:#dde3e7;"></div>
<div style="position:absolute;left:647px;top:556px;width:1px;height:27px;background:#dde3e7;"></div>
<div style="position:absolute;left:722px;top:556px;width:1px;height:27px;background:#dde3e7;"></div>
<div style="position:absolute;left:813px;top:556px;width:1px;height:27px;background:#dde3e7;"></div>
<div style="position:absolute;left:904px;top:556px;width:1px;height:27px;background:#dde3e7;"></div>
<div style="position:absolute;left:979px;top:556px;width:1px;height:27px;background:#dde3e7;"></div>
<div style="position:absolute;left:1069px;top:556px;width:1px;height:27px;background:#dde3e7;"></div>
<div style="position:absolute;left:1169px;top:556px;width:1px;height:27px;background:#dde3e7;"></div>
<div style="position:absolute;left:1269px;top:556px;width:1px;height:27px;background:#dde3e7;"></div>
<div style="position:absolute;left:1369px;top:556px;width:1px;height:27px;background:#dde3e7;"></div>
<div style="position:absolute;left:97px;top:583px;width:1px;height:1px;background:#e6e9eb;"></div>
<div style="position:absolute;left:197px;top:583px;width:1px;height:1px;background:#e6e9eb;"></div>
<div style="position:absolute;left:297px;top:583px;width:1px;height:1px;background:#e6e9eb;"></div>
<div style="position:absolute;left:497px;top:583px;width:1px;height:1px;background:#e6e9eb;"></div>
<div style="position:absolute;left:572px;top:583px;width:1px;height:1px;background:#e6e9eb;"></div>
<div style="position:absolute;left:647px;top:583px;width:1px;height:1px;background:#e6e9eb;"></div>
<div style="position:absolute;left:722px;top:583px;width:1px;height:1px;background:#e6e9eb;"></div>
<div style="position:absolute;left:813px;top:583px;width:1px;height:1px;background:#e6e9eb;"></div>
<div style="position:absolute;left:904px;top:583px;width:1px;height:1px;background:#e6e9eb;"></div>
<div style="position:absolute;left:979px;top:583px;width:1px;height:1px;background:#e6e9eb;"></div>
<div style="position:absolute;left:1069px;top:583px;width:1px;height:1px;background:#e6e9eb;"></div>
<div style="position:absolute;left:1169px;top:583px;width:1px;height:1px;background:#e6e9eb;"></div>
<div style="position:absolute;left:1269px;top:583px;width:1px;height:1px;background:#e6e9eb;"></div>
<div style="position:absolute;left:1369px;top:583px;width:1px;height:1px;background:#e6e9eb;"></div>
<div class="t" style="left:13px;top:565.29px;font-size:12px;line-height:12px;color:#0a5f98;transform:scaleX(0.9551);">PO-0012595</div>
<div class="t" style="left:103px;top:565.29px;font-size:12px;line-height:12px;color:#262626;transform:scaleX(0.9769);">Lievy Folkowitch</div>
<div class="t" style="left:203.5px;top:565.29px;font-size:12px;line-height:12px;color:#262626;transform:scaleX(0.9600);">RounBlac9Nylo</div>
<div class="t" style="left:306.5px;top:565.16px;font-size:11.8px;line-height:11.8px;color:#161616;transform:scaleX(0.9620);-webkit-text-stroke:0.12px #161616;">Round Black 9 Nylon</div>
<div class="t" style="left:504.7px;top:565.99px;font-size:12px;line-height:12px;color:#262626;transform:scaleX(0.9300);">2</div>
<div class="t" style="left:579.7px;top:565.99px;font-size:12px;line-height:12px;color:#262626;transform:scaleX(0.9300);">0</div>
<div class="t" style="left:655.0px;top:565.99px;font-size:12px;line-height:12px;color:#262626;transform:scaleX(0.9300);">2</div>
<div class="t" style="left:984.8px;top:565.29px;font-size:12px;line-height:12px;color:#0a5f98;transform:scaleX(0.9639);">B-0012295</div>
<div class="t" style="left:1075.0px;top:564.79px;font-size:12px;line-height:12px;color:#262626;transform:scaleX(0.8850);">$2.00</div>
<div class="t" style="left:1275.0px;top:564.79px;font-size:12px;line-height:12px;color:#262626;transform:scaleX(0.8850);">$1.00</div>
<div style="position:absolute;left:97px;top:584px;width:1px;height:28px;background:#eaeaea;"></div>
<div style="position:absolute;left:197px;top:584px;width:1px;height:28px;background:#eaeaea;"></div>
<div style="position:absolute;left:297px;top:584px;width:1px;height:28px;background:#eaeaea;"></div>
<div style="position:absolute;left:497px;top:584px;width:1px;height:28px;background:#eaeaea;"></div>
<div style="position:absolute;left:572px;top:584px;width:1px;height:28px;background:#eaeaea;"></div>
<div style="position:absolute;left:647px;top:584px;width:1px;height:28px;background:#eaeaea;"></div>
<div style="position:absolute;left:722px;top:584px;width:1px;height:28px;background:#eaeaea;"></div>
<div style="position:absolute;left:813px;top:584px;width:1px;height:28px;background:#eaeaea;"></div>
<div style="position:absolute;left:904px;top:584px;width:1px;height:28px;background:#eaeaea;"></div>
<div style="position:absolute;left:979px;top:584px;width:1px;height:28px;background:#eaeaea;"></div>
<div style="position:absolute;left:1069px;top:584px;width:1px;height:28px;background:#eaeaea;"></div>
<div style="position:absolute;left:1169px;top:584px;width:1px;height:28px;background:#eaeaea;"></div>
<div style="position:absolute;left:1269px;top:584px;width:1px;height:28px;background:#eaeaea;"></div>
<div style="position:absolute;left:1369px;top:584px;width:1px;height:28px;background:#eaeaea;"></div>
<div class="t" style="left:13px;top:593.29px;font-size:12px;line-height:12px;color:#0a5f98;transform:scaleX(0.9551);">PO-0012595</div>
<div class="t" style="left:103px;top:593.29px;font-size:12px;line-height:12px;color:#262626;transform:scaleX(0.9769);">Lievy Folkowitch</div>
<div class="t" style="left:203.5px;top:593.29px;font-size:12px;line-height:12px;color:#262626;transform:scaleX(0.9600);">RounBlac14Cott</div>
<div class="t" style="left:306.5px;top:593.16px;font-size:11.8px;line-height:11.8px;color:#161616;transform:scaleX(0.9620);-webkit-text-stroke:0.12px #161616;">Round Black 14 Cotton</div>
<div class="t" style="left:504.7px;top:593.99px;font-size:12px;line-height:12px;color:#262626;transform:scaleX(0.9300);">2</div>
<div class="t" style="left:579.7px;top:593.99px;font-size:12px;line-height:12px;color:#262626;transform:scaleX(0.9300);">0</div>
<div class="t" style="left:655.0px;top:593.99px;font-size:12px;line-height:12px;color:#262626;transform:scaleX(0.9300);">2</div>
<div class="t" style="left:984.8px;top:593.29px;font-size:12px;line-height:12px;color:#0a5f98;transform:scaleX(0.9639);">B-0012295</div>
<div class="t" style="left:1075.0px;top:592.79px;font-size:12px;line-height:12px;color:#262626;transform:scaleX(0.8850);">$2.00</div>
<div class="t" style="left:1275.0px;top:592.79px;font-size:12px;line-height:12px;color:#262626;transform:scaleX(0.8850);">$1.00</div>
<div style="position:absolute;left:8px;top:612px;width:1361px;height:27px;background:#ebf2f6;"></div>
<div style="position:absolute;left:8px;top:639px;width:1361px;height:1px;background:#f5f8fa;"></div>
<div style="position:absolute;left:97px;top:612px;width:1px;height:27px;background:#dde3e7;"></div>
<div style="position:absolute;left:197px;top:612px;width:1px;height:27px;background:#dde3e7;"></div>
<div style="position:absolute;left:297px;top:612px;width:1px;height:27px;background:#dde3e7;"></div>
<div style="position:absolute;left:497px;top:612px;width:1px;height:27px;background:#dde3e7;"></div>
<div style="position:absolute;left:572px;top:612px;width:1px;height:27px;background:#dde3e7;"></div>
<div style="position:absolute;left:647px;top:612px;width:1px;height:27px;background:#dde3e7;"></div>
<div style="position:absolute;left:722px;top:612px;width:1px;height:27px;background:#dde3e7;"></div>
<div style="position:absolute;left:813px;top:612px;width:1px;height:27px;background:#dde3e7;"></div>
<div style="position:absolute;left:904px;top:612px;width:1px;height:27px;background:#dde3e7;"></div>
<div style="position:absolute;left:979px;top:612px;width:1px;height:27px;background:#dde3e7;"></div>
<div style="position:absolute;left:1069px;top:612px;width:1px;height:27px;background:#dde3e7;"></div>
<div style="position:absolute;left:1169px;top:612px;width:1px;height:27px;background:#dde3e7;"></div>
<div style="position:absolute;left:1269px;top:612px;width:1px;height:27px;background:#dde3e7;"></div>
<div style="position:absolute;left:1369px;top:612px;width:1px;height:27px;background:#dde3e7;"></div>
<div style="position:absolute;left:97px;top:639px;width:1px;height:1px;background:#e6e9eb;"></div>
<div style="position:absolute;left:197px;top:639px;width:1px;height:1px;background:#e6e9eb;"></div>
<div style="position:absolute;left:297px;top:639px;width:1px;height:1px;background:#e6e9eb;"></div>
<div style="position:absolute;left:497px;top:639px;width:1px;height:1px;background:#e6e9eb;"></div>
<div style="position:absolute;left:572px;top:639px;width:1px;height:1px;background:#e6e9eb;"></div>
<div style="position:absolute;left:647px;top:639px;width:1px;height:1px;background:#e6e9eb;"></div>
<div style="position:absolute;left:722px;top:639px;width:1px;height:1px;background:#e6e9eb;"></div>
<div style="position:absolute;left:813px;top:639px;width:1px;height:1px;background:#e6e9eb;"></div>
<div style="position:absolute;left:904px;top:639px;width:1px;height:1px;background:#e6e9eb;"></div>
<div style="position:absolute;left:979px;top:639px;width:1px;height:1px;background:#e6e9eb;"></div>
<div style="position:absolute;left:1069px;top:639px;width:1px;height:1px;background:#e6e9eb;"></div>
<div style="position:absolute;left:1169px;top:639px;width:1px;height:1px;background:#e6e9eb;"></div>
<div style="position:absolute;left:1269px;top:639px;width:1px;height:1px;background:#e6e9eb;"></div>
<div style="position:absolute;left:1369px;top:639px;width:1px;height:1px;background:#e6e9eb;"></div>
<div class="t" style="left:13px;top:621.29px;font-size:12px;line-height:12px;color:#0a5f98;transform:scaleX(0.9551);">PO-0012595</div>
<div class="t" style="left:103px;top:621.29px;font-size:12px;line-height:12px;color:#262626;transform:scaleX(0.9769);">Lievy Folkowitch</div>
<div class="t" style="left:203.5px;top:621.29px;font-size:12px;line-height:12px;color:#262626;transform:scaleX(1.0028);">V-NeWhit5Cott</div>
<div class="t" style="left:306.5px;top:621.16px;font-size:11.8px;line-height:11.8px;color:#161616;transform:scaleX(0.9821);-webkit-text-stroke:0.12px #161616;">V-Neck White 5 Cotton</div>
<div class="t" style="left:504.7px;top:621.99px;font-size:12px;line-height:12px;color:#262626;transform:scaleX(0.9300);">2</div>
<div class="t" style="left:579.7px;top:621.99px;font-size:12px;line-height:12px;color:#262626;transform:scaleX(0.9300);">0</div>
<div class="t" style="left:655.0px;top:621.99px;font-size:12px;line-height:12px;color:#262626;transform:scaleX(0.9300);">2</div>
<div class="t" style="left:984.8px;top:621.29px;font-size:12px;line-height:12px;color:#0a5f98;transform:scaleX(0.9639);">B-0012295</div>
<div class="t" style="left:1075.0px;top:620.79px;font-size:12px;line-height:12px;color:#262626;transform:scaleX(0.8850);">$2.00</div>
<div class="t" style="left:1275.0px;top:620.79px;font-size:12px;line-height:12px;color:#262626;transform:scaleX(0.8850);">$1.00</div>
<div style="position:absolute;left:97px;top:640px;width:1px;height:28px;background:#eaeaea;"></div>
<div style="position:absolute;left:197px;top:640px;width:1px;height:28px;background:#eaeaea;"></div>
<div style="position:absolute;left:297px;top:640px;width:1px;height:28px;background:#eaeaea;"></div>
<div style="position:absolute;left:497px;top:640px;width:1px;height:28px;background:#eaeaea;"></div>
<div style="position:absolute;left:572px;top:640px;width:1px;height:28px;background:#eaeaea;"></div>
<div style="position:absolute;left:647px;top:640px;width:1px;height:28px;background:#eaeaea;"></div>
<div style="position:absolute;left:722px;top:640px;width:1px;height:28px;background:#eaeaea;"></div>
<div style="position:absolute;left:813px;top:640px;width:1px;height:28px;background:#eaeaea;"></div>
<div style="position:absolute;left:904px;top:640px;width:1px;height:28px;background:#eaeaea;"></div>
<div style="position:absolute;left:979px;top:640px;width:1px;height:28px;background:#eaeaea;"></div>
<div style="position:absolute;left:1069px;top:640px;width:1px;height:28px;background:#eaeaea;"></div>
<div style="position:absolute;left:1169px;top:640px;width:1px;height:28px;background:#eaeaea;"></div>
<div style="position:absolute;left:1269px;top:640px;width:1px;height:28px;background:#eaeaea;"></div>
<div style="position:absolute;left:1369px;top:640px;width:1px;height:28px;background:#eaeaea;"></div>
<div class="t" style="left:13px;top:649.29px;font-size:12px;line-height:12px;color:#0a5f98;transform:scaleX(0.9551);">PO-0012595</div>
<div class="t" style="left:103px;top:649.29px;font-size:12px;line-height:12px;color:#262626;transform:scaleX(0.9769);">Lievy Folkowitch</div>
<div class="t" style="left:203.5px;top:649.29px;font-size:12px;line-height:12px;color:#262626;transform:scaleX(0.9878);">RounWhit10Nylo</div>
<div class="t" style="left:306.5px;top:649.16px;font-size:11.8px;line-height:11.8px;color:#161616;transform:scaleX(0.9857);-webkit-text-stroke:0.12px #161616;">Round White 10 Nylon</div>
<div class="t" style="left:504.7px;top:649.99px;font-size:12px;line-height:12px;color:#262626;transform:scaleX(0.9300);">2</div>
<div class="t" style="left:579.7px;top:649.99px;font-size:12px;line-height:12px;color:#262626;transform:scaleX(0.9300);">0</div>
<div class="t" style="left:655.0px;top:649.99px;font-size:12px;line-height:12px;color:#262626;transform:scaleX(0.9300);">2</div>
<div class="t" style="left:984.8px;top:649.29px;font-size:12px;line-height:12px;color:#0a5f98;transform:scaleX(0.9639);">B-0012295</div>
<div class="t" style="left:1075.0px;top:648.79px;font-size:12px;line-height:12px;color:#262626;transform:scaleX(0.8850);">$2.00</div>
<div class="t" style="left:1275.0px;top:648.79px;font-size:12px;line-height:12px;color:#262626;transform:scaleX(0.8850);">$1.00</div>
<div style="position:absolute;left:8px;top:668px;width:1361px;height:27px;background:#ebf2f6;"></div>
<div style="position:absolute;left:8px;top:695px;width:1361px;height:1px;background:#f5f8fa;"></div>
<div style="position:absolute;left:97px;top:668px;width:1px;height:27px;background:#dde3e7;"></div>
<div style="position:absolute;left:197px;top:668px;width:1px;height:27px;background:#dde3e7;"></div>
<div style="position:absolute;left:297px;top:668px;width:1px;height:27px;background:#dde3e7;"></div>
<div style="position:absolute;left:497px;top:668px;width:1px;height:27px;background:#dde3e7;"></div>
<div style="position:absolute;left:572px;top:668px;width:1px;height:27px;background:#dde3e7;"></div>
<div style="position:absolute;left:647px;top:668px;width:1px;height:27px;background:#dde3e7;"></div>
<div style="position:absolute;left:722px;top:668px;width:1px;height:27px;background:#dde3e7;"></div>
<div style="position:absolute;left:813px;top:668px;width:1px;height:27px;background:#dde3e7;"></div>
<div style="position:absolute;left:904px;top:668px;width:1px;height:27px;background:#dde3e7;"></div>
<div style="position:absolute;left:979px;top:668px;width:1px;height:27px;background:#dde3e7;"></div>
<div style="position:absolute;left:1069px;top:668px;width:1px;height:27px;background:#dde3e7;"></div>
<div style="position:absolute;left:1169px;top:668px;width:1px;height:27px;background:#dde3e7;"></div>
<div style="position:absolute;left:1269px;top:668px;width:1px;height:27px;background:#dde3e7;"></div>
<div style="position:absolute;left:1369px;top:668px;width:1px;height:27px;background:#dde3e7;"></div>
<div style="position:absolute;left:97px;top:695px;width:1px;height:1px;background:#e6e9eb;"></div>
<div style="position:absolute;left:197px;top:695px;width:1px;height:1px;background:#e6e9eb;"></div>
<div style="position:absolute;left:297px;top:695px;width:1px;height:1px;background:#e6e9eb;"></div>
<div style="position:absolute;left:497px;top:695px;width:1px;height:1px;background:#e6e9eb;"></div>
<div style="position:absolute;left:572px;top:695px;width:1px;height:1px;background:#e6e9eb;"></div>
<div style="position:absolute;left:647px;top:695px;width:1px;height:1px;background:#e6e9eb;"></div>
<div style="position:absolute;left:722px;top:695px;width:1px;height:1px;background:#e6e9eb;"></div>
<div style="position:absolute;left:813px;top:695px;width:1px;height:1px;background:#e6e9eb;"></div>
<div style="position:absolute;left:904px;top:695px;width:1px;height:1px;background:#e6e9eb;"></div>
<div style="position:absolute;left:979px;top:695px;width:1px;height:1px;background:#e6e9eb;"></div>
<div style="position:absolute;left:1069px;top:695px;width:1px;height:1px;background:#e6e9eb;"></div>
<div style="position:absolute;left:1169px;top:695px;width:1px;height:1px;background:#e6e9eb;"></div>
<div style="position:absolute;left:1269px;top:695px;width:1px;height:1px;background:#e6e9eb;"></div>
<div style="position:absolute;left:1369px;top:695px;width:1px;height:1px;background:#e6e9eb;"></div>
<div class="t" style="left:13px;top:677.29px;font-size:12px;line-height:12px;color:#0a5f98;transform:scaleX(0.9551);">PO-0012595</div>
<div class="t" style="left:103px;top:677.29px;font-size:12px;line-height:12px;color:#262626;transform:scaleX(0.9769);">Lievy Folkowitch</div>
<div class="t" style="left:203.5px;top:677.29px;font-size:12px;line-height:12px;color:#262626;transform:scaleX(0.9600);">RounGree9Nylo</div>
<div class="t" style="left:306.5px;top:677.16px;font-size:11.8px;line-height:11.8px;color:#161616;transform:scaleX(0.9620);-webkit-text-stroke:0.12px #161616;">Round Green 9 Nylon</div>
<div class="t" style="left:504.7px;top:677.99px;font-size:12px;line-height:12px;color:#262626;transform:scaleX(0.9300);">2</div>
<div class="t" style="left:579.7px;top:677.99px;font-size:12px;line-height:12px;color:#262626;transform:scaleX(0.9300);">0</div>
<div class="t" style="left:655.0px;top:677.99px;font-size:12px;line-height:12px;color:#262626;transform:scaleX(0.9300);">2</div>
<div class="t" style="left:984.8px;top:677.29px;font-size:12px;line-height:12px;color:#0a5f98;transform:scaleX(0.9639);">B-0012295</div>
<div class="t" style="left:1075.0px;top:676.79px;font-size:12px;line-height:12px;color:#262626;transform:scaleX(0.8850);">$2.00</div>
<div class="t" style="left:1275.0px;top:676.79px;font-size:12px;line-height:12px;color:#262626;transform:scaleX(0.8850);">$1.00</div>
<div style="position:absolute;left:97px;top:696px;width:1px;height:28px;background:#eaeaea;"></div>
<div style="position:absolute;left:197px;top:696px;width:1px;height:28px;background:#eaeaea;"></div>
<div style="position:absolute;left:297px;top:696px;width:1px;height:28px;background:#eaeaea;"></div>
<div style="position:absolute;left:497px;top:696px;width:1px;height:28px;background:#eaeaea;"></div>
<div style="position:absolute;left:572px;top:696px;width:1px;height:28px;background:#eaeaea;"></div>
<div style="position:absolute;left:647px;top:696px;width:1px;height:28px;background:#eaeaea;"></div>
<div style="position:absolute;left:722px;top:696px;width:1px;height:28px;background:#eaeaea;"></div>
<div style="position:absolute;left:813px;top:696px;width:1px;height:28px;background:#eaeaea;"></div>
<div style="position:absolute;left:904px;top:696px;width:1px;height:28px;background:#eaeaea;"></div>
<div style="position:absolute;left:979px;top:696px;width:1px;height:28px;background:#eaeaea;"></div>
<div style="position:absolute;left:1069px;top:696px;width:1px;height:28px;background:#eaeaea;"></div>
<div style="position:absolute;left:1169px;top:696px;width:1px;height:28px;background:#eaeaea;"></div>
<div style="position:absolute;left:1269px;top:696px;width:1px;height:28px;background:#eaeaea;"></div>
<div style="position:absolute;left:1369px;top:696px;width:1px;height:28px;background:#eaeaea;"></div>
<div class="t" style="left:13px;top:705.29px;font-size:12px;line-height:12px;color:#0a5f98;transform:scaleX(0.9551);">PO-0012595</div>
<div class="t" style="left:103px;top:705.29px;font-size:12px;line-height:12px;color:#262626;transform:scaleX(0.9769);">Lievy Folkowitch</div>
<div class="t" style="left:203.5px;top:705.29px;font-size:12px;line-height:12px;color:#262626;transform:scaleX(0.9600);">V-NeBlac10Cott</div>
<div class="t" style="left:306.5px;top:705.16px;font-size:11.8px;line-height:11.8px;color:#161616;transform:scaleX(0.9500);-webkit-text-stroke:0.12px #161616;">V-Neck Black 10 Cotton</div>
<div class="t" style="left:504.7px;top:705.99px;font-size:12px;line-height:12px;color:#262626;transform:scaleX(0.9300);">2</div>
<div class="t" style="left:579.7px;top:705.99px;font-size:12px;line-height:12px;color:#262626;transform:scaleX(0.9300);">0</div>
<div class="t" style="left:655.0px;top:705.99px;font-size:12px;line-height:12px;color:#262626;transform:scaleX(0.9300);">2</div>
<div class="t" style="left:984.8px;top:705.29px;font-size:12px;line-height:12px;color:#0a5f98;transform:scaleX(0.9639);">B-0012295</div>
<div class="t" style="left:1075.0px;top:704.79px;font-size:12px;line-height:12px;color:#262626;transform:scaleX(0.8850);">$2.00</div>
<div class="t" style="left:1275.0px;top:704.79px;font-size:12px;line-height:12px;color:#262626;transform:scaleX(0.8850);">$1.00</div>
<div style="position:absolute;left:8px;top:724px;width:1361px;height:27px;background:#ebf2f6;"></div>
<div style="position:absolute;left:8px;top:751px;width:1361px;height:1px;background:#f5f8fa;"></div>
<div style="position:absolute;left:97px;top:724px;width:1px;height:27px;background:#dde3e7;"></div>
<div style="position:absolute;left:197px;top:724px;width:1px;height:27px;background:#dde3e7;"></div>
<div style="position:absolute;left:297px;top:724px;width:1px;height:27px;background:#dde3e7;"></div>
<div style="position:absolute;left:497px;top:724px;width:1px;height:27px;background:#dde3e7;"></div>
<div style="position:absolute;left:572px;top:724px;width:1px;height:27px;background:#dde3e7;"></div>
<div style="position:absolute;left:647px;top:724px;width:1px;height:27px;background:#dde3e7;"></div>
<div style="position:absolute;left:722px;top:724px;width:1px;height:27px;background:#dde3e7;"></div>
<div style="position:absolute;left:813px;top:724px;width:1px;height:27px;background:#dde3e7;"></div>
<div style="position:absolute;left:904px;top:724px;width:1px;height:27px;background:#dde3e7;"></div>
<div style="position:absolute;left:979px;top:724px;width:1px;height:27px;background:#dde3e7;"></div>
<div style="position:absolute;left:1069px;top:724px;width:1px;height:27px;background:#dde3e7;"></div>
<div style="position:absolute;left:1169px;top:724px;width:1px;height:27px;background:#dde3e7;"></div>
<div style="position:absolute;left:1269px;top:724px;width:1px;height:27px;background:#dde3e7;"></div>
<div style="position:absolute;left:1369px;top:724px;width:1px;height:27px;background:#dde3e7;"></div>
<div style="position:absolute;left:97px;top:751px;width:1px;height:1px;background:#e6e9eb;"></div>
<div style="position:absolute;left:197px;top:751px;width:1px;height:1px;background:#e6e9eb;"></div>
<div style="position:absolute;left:297px;top:751px;width:1px;height:1px;background:#e6e9eb;"></div>
<div style="position:absolute;left:497px;top:751px;width:1px;height:1px;background:#e6e9eb;"></div>
<div style="position:absolute;left:572px;top:751px;width:1px;height:1px;background:#e6e9eb;"></div>
<div style="position:absolute;left:647px;top:751px;width:1px;height:1px;background:#e6e9eb;"></div>
<div style="position:absolute;left:722px;top:751px;width:1px;height:1px;background:#e6e9eb;"></div>
<div style="position:absolute;left:813px;top:751px;width:1px;height:1px;background:#e6e9eb;"></div>
<div style="position:absolute;left:904px;top:751px;width:1px;height:1px;background:#e6e9eb;"></div>
<div style="position:absolute;left:979px;top:751px;width:1px;height:1px;background:#e6e9eb;"></div>
<div style="position:absolute;left:1069px;top:751px;width:1px;height:1px;background:#e6e9eb;"></div>
<div style="position:absolute;left:1169px;top:751px;width:1px;height:1px;background:#e6e9eb;"></div>
<div style="position:absolute;left:1269px;top:751px;width:1px;height:1px;background:#e6e9eb;"></div>
<div style="position:absolute;left:1369px;top:751px;width:1px;height:1px;background:#e6e9eb;"></div>
<div class="t" style="left:13px;top:733.29px;font-size:12px;line-height:12px;color:#0a5f98;transform:scaleX(0.9551);">PO-0012595</div>
<div class="t" style="left:103px;top:733.29px;font-size:12px;line-height:12px;color:#262626;transform:scaleX(0.9769);">Lievy Folkowitch</div>
<div class="t" style="left:203.5px;top:733.29px;font-size:12px;line-height:12px;color:#262626;transform:scaleX(0.9457);">RounGree14Cott</div>
<div class="t" style="left:306.5px;top:733.16px;font-size:11.8px;line-height:11.8px;color:#161616;transform:scaleX(0.9458);-webkit-text-stroke:0.12px #161616;">Round Green Custom Shreck</div>
<div class="t" style="left:504.7px;top:733.99px;font-size:12px;line-height:12px;color:#262626;transform:scaleX(0.9300);">2</div>
<div class="t" style="left:579.7px;top:733.99px;font-size:12px;line-height:12px;color:#262626;transform:scaleX(0.9300);">0</div>
<div class="t" style="left:655.0px;top:733.99px;font-size:12px;line-height:12px;color:#262626;transform:scaleX(0.9300);">2</div>
<div class="t" style="left:984.8px;top:733.29px;font-size:12px;line-height:12px;color:#0a5f98;transform:scaleX(0.9639);">B-0012295</div>
<div class="t" style="left:1075.0px;top:732.79px;font-size:12px;line-height:12px;color:#262626;transform:scaleX(0.8850);">$2.00</div>
<div class="t" style="left:1275.0px;top:732.79px;font-size:12px;line-height:12px;color:#262626;transform:scaleX(0.8850);">$1.00</div>
<svg style="position:absolute;left:1372px;top:264px" width="12" height="10"><path d="M2 7.5 L5.5 3.5 L9 7.5" fill="none" stroke="#ececec" stroke-width="1.2"/></svg>
<div style="position:absolute;left:1374px;top:277px;width:7px;height:210px;background:#dcdcdc;"></div>
<svg style="position:absolute;left:1372px;top:738px" width="12" height="10"><path d="M2 2.5 L6 6.5 L10 2.5" fill="none" stroke="#e6e6e6" stroke-width="1.3"/></svg>
<svg style="position:absolute;left:10px;top:752px" width="10" height="12"><path d="M7 2 L3 6 L7 10" fill="none" stroke="#ececec" stroke-width="1.3"/></svg>
<svg style="position:absolute;left:1358px;top:752px" width="10" height="12"><path d="M3 2 L7 6 L3 10" fill="none" stroke="#ececec" stroke-width="1.3"/></svg>
<div style="position:absolute;left:745px;top:763px;width:633px;height:38px;background:transparent;border:3px solid #f00000;box-sizing:border-box;border-radius:2px;background:#fff;"></div>
<div class="t" style="left:754.2px;top:776.99px;font-size:12px;line-height:12px;color:#1f1f1f;font-weight:bold;transform:scaleX(0.9800);">Total Shipment Qty: 52</div>
<div class="t" style="left:902.2px;top:776.99px;font-size:12px;line-height:12px;color:#1f1f1f;font-weight:bold;transform:scaleX(0.9586);">Total cartons: 0</div>
<div class="t" style="left:1006.5px;top:776.99px;font-size:12px;line-height:12px;color:#1f1f1f;font-weight:bold;transform:scaleX(0.9594);">Total CBM: 5</div>
<div class="t" style="left:1097px;top:776.99px;font-size:12px;line-height:12px;color:#1f1f1f;font-weight:bold;transform:scaleX(0.9688);">Total COGS: $142.00</div>
<div class="t" style="left:1231px;top:776.99px;font-size:12px;line-height:12px;color:#1f1f1f;font-weight:bold;transform:scaleX(0.9565);">Total Landed Cost: $0.00</div>
<div class="t" style="left:7.5px;top:777.47px;font-size:11.2px;line-height:11.2px;color:#595959;transform:scaleX(0.8942);">NOTES</div>
<div style="position:absolute;left:7px;top:792px;width:485px;height:100px;background:#f4f4f4;border-radius:2px;box-shadow:inset 0 0 0 1px #ededed;"></div>
<svg style="position:absolute;left:0;top:0;overflow:visible" width="1" height="1"><path transform="translate(469.5 870) scale(0.833)" d="M3 17.25V21h3.75L17.81 9.94l-3.75-3.75L3 17.25zM20.71 7.04c.39-.39.39-1.02 0-1.41l-2.34-2.34c-.39-.39-1.02-.39-1.41 0l-1.83 1.83 3.75 3.75 1.83-1.83z" fill="#005f96"/></svg>
<div style="position:absolute;left:0px;top:900px;width:1402px;height:1px;background:#dedede;"></div>
<div style="position:absolute;left:7px;top:917px;width:108px;height:25px;background:#005f96;border-radius:2px;"></div>
<div class="t" style="left:22.7px;top:923.75px;font-size:12.4px;line-height:12.4px;color:#ffffff;transform:scaleX(0.8003);">DELETE ORDER</div>
<div style="position:absolute;left:0px;top:930px;width:62px;height:20px;background:#fafafa;"></div>
<div style="position:absolute;left:0px;top:930px;width:62px;height:1px;background:#1a6fb0;"></div>
<div style="position:absolute;left:1101px;top:917px;width:75px;height:25px;background:#eeeeee;"></div>
<div class="t" style="left:1116px;top:923.95px;font-size:12.4px;line-height:12.4px;color:#0a5f98;transform:scaleX(0.8747);">CANCEL</div>
<div style="position:absolute;left:1186px;top:917px;width:75px;height:25px;background:#005f96;border-radius:2px;"></div>
<div class="t" style="left:1211px;top:923.95px;font-size:12.4px;line-height:12.4px;color:#ffffff;transform:scaleX(0.8083);">SAVE</div>
<div style="position:absolute;left:1271px;top:917px;width:115px;height:25px;background:#005f96;border-radius:2px;"></div>
<div class="t" style="left:1286px;top:923.95px;font-size:12.4px;line-height:12.4px;color:#ffffff;transform:scaleX(0.8313);">SAVE &amp; RECEIVE</div>
<div class="t" style="left:1427px;top:88.57px;font-size:12.5px;line-height:12.5px;color:#333333;transform:scaleX(0.9041);">TRANSACTION</div>
<div class="t" style="left:1573px;top:88.57px;font-size:12.5px;line-height:12.5px;color:#333333;transform:scaleX(0.8975);">VENDOR</div>
<div style="position:absolute;left:1403px;top:113px;width:254px;height:1px;background:#e4e4e4;"></div>
<div style="position:absolute;left:1403px;top:112px;width:129px;height:2px;background:#005f96;"></div>
<div class="t" style="left:1419px;top:133.78px;font-size:12.6px;line-height:12.6px;color:#222222;transform:scaleX(0.9972);">SUMMARY</div>
<div class="t" style="left:1419.3px;top:161.89px;font-size:12px;line-height:12px;color:#222222;transform:scaleX(0.9657);">Created on 11/13/2020 10:13 AM by Test</div>
<div class="t" style="left:1419.3px;top:181.99px;font-size:12px;line-height:12px;color:#222222;transform:scaleX(0.9712);">Last edited on 11/13/2020 11:53 AM by Test</div>
<div style="position:absolute;left:1403px;top:212px;width:254px;height:2px;background:#ebebeb;"></div>
<div class="t" style="left:1416.6px;top:229.57px;font-size:12.5px;line-height:12.5px;color:#222222;transform:scaleX(0.9534);">RELATED DOCUMENTS</div>
<div class="t" style="left:1429.5px;top:262.71px;font-size:11.5px;line-height:11.5px;color:#595959;font-weight:bold;transform:scaleX(0.9951);">Lievy Folkowitch</div>
<div class="t" style="left:1430.5px;top:284.84px;font-size:11px;line-height:11px;color:#7b7b7b;transform:scaleX(1.0177);">11/13/2020</div>
<div class="t" style="left:1493.7px;top:282.79px;font-size:12px;line-height:12px;color:#0a5f98;transform:scaleX(0.9462);">IRC-0011269</div>
<div class="t" style="left:1611.5px;top:282.79px;font-size:12px;line-height:12px;color:#222222;transform:scaleX(0.9536);">$134.0</div>
<div class="t" style="left:1429.5px;top:304.71px;font-size:11.5px;line-height:11.5px;color:#595959;font-weight:bold;transform:scaleX(0.9951);">Lievy Folkowitch</div>
<div class="t" style="left:1430.5px;top:326.84px;font-size:11px;line-height:11px;color:#7b7b7b;transform:scaleX(1.0177);">11/13/2020</div>
<div class="t" style="left:1493.7px;top:324.79px;font-size:12px;line-height:12px;color:#0a5f98;transform:scaleX(0.9845);">PO-0012595</div>
<div class="t" style="left:1611.5px;top:324.79px;font-size:12px;line-height:12px;color:#222222;transform:scaleX(0.9536);">$136.0</div>
<div style="position:absolute;left:1643px;top:280px;width:14px;height:70px;background:#ffffff;"></div>
</div></body></html>
